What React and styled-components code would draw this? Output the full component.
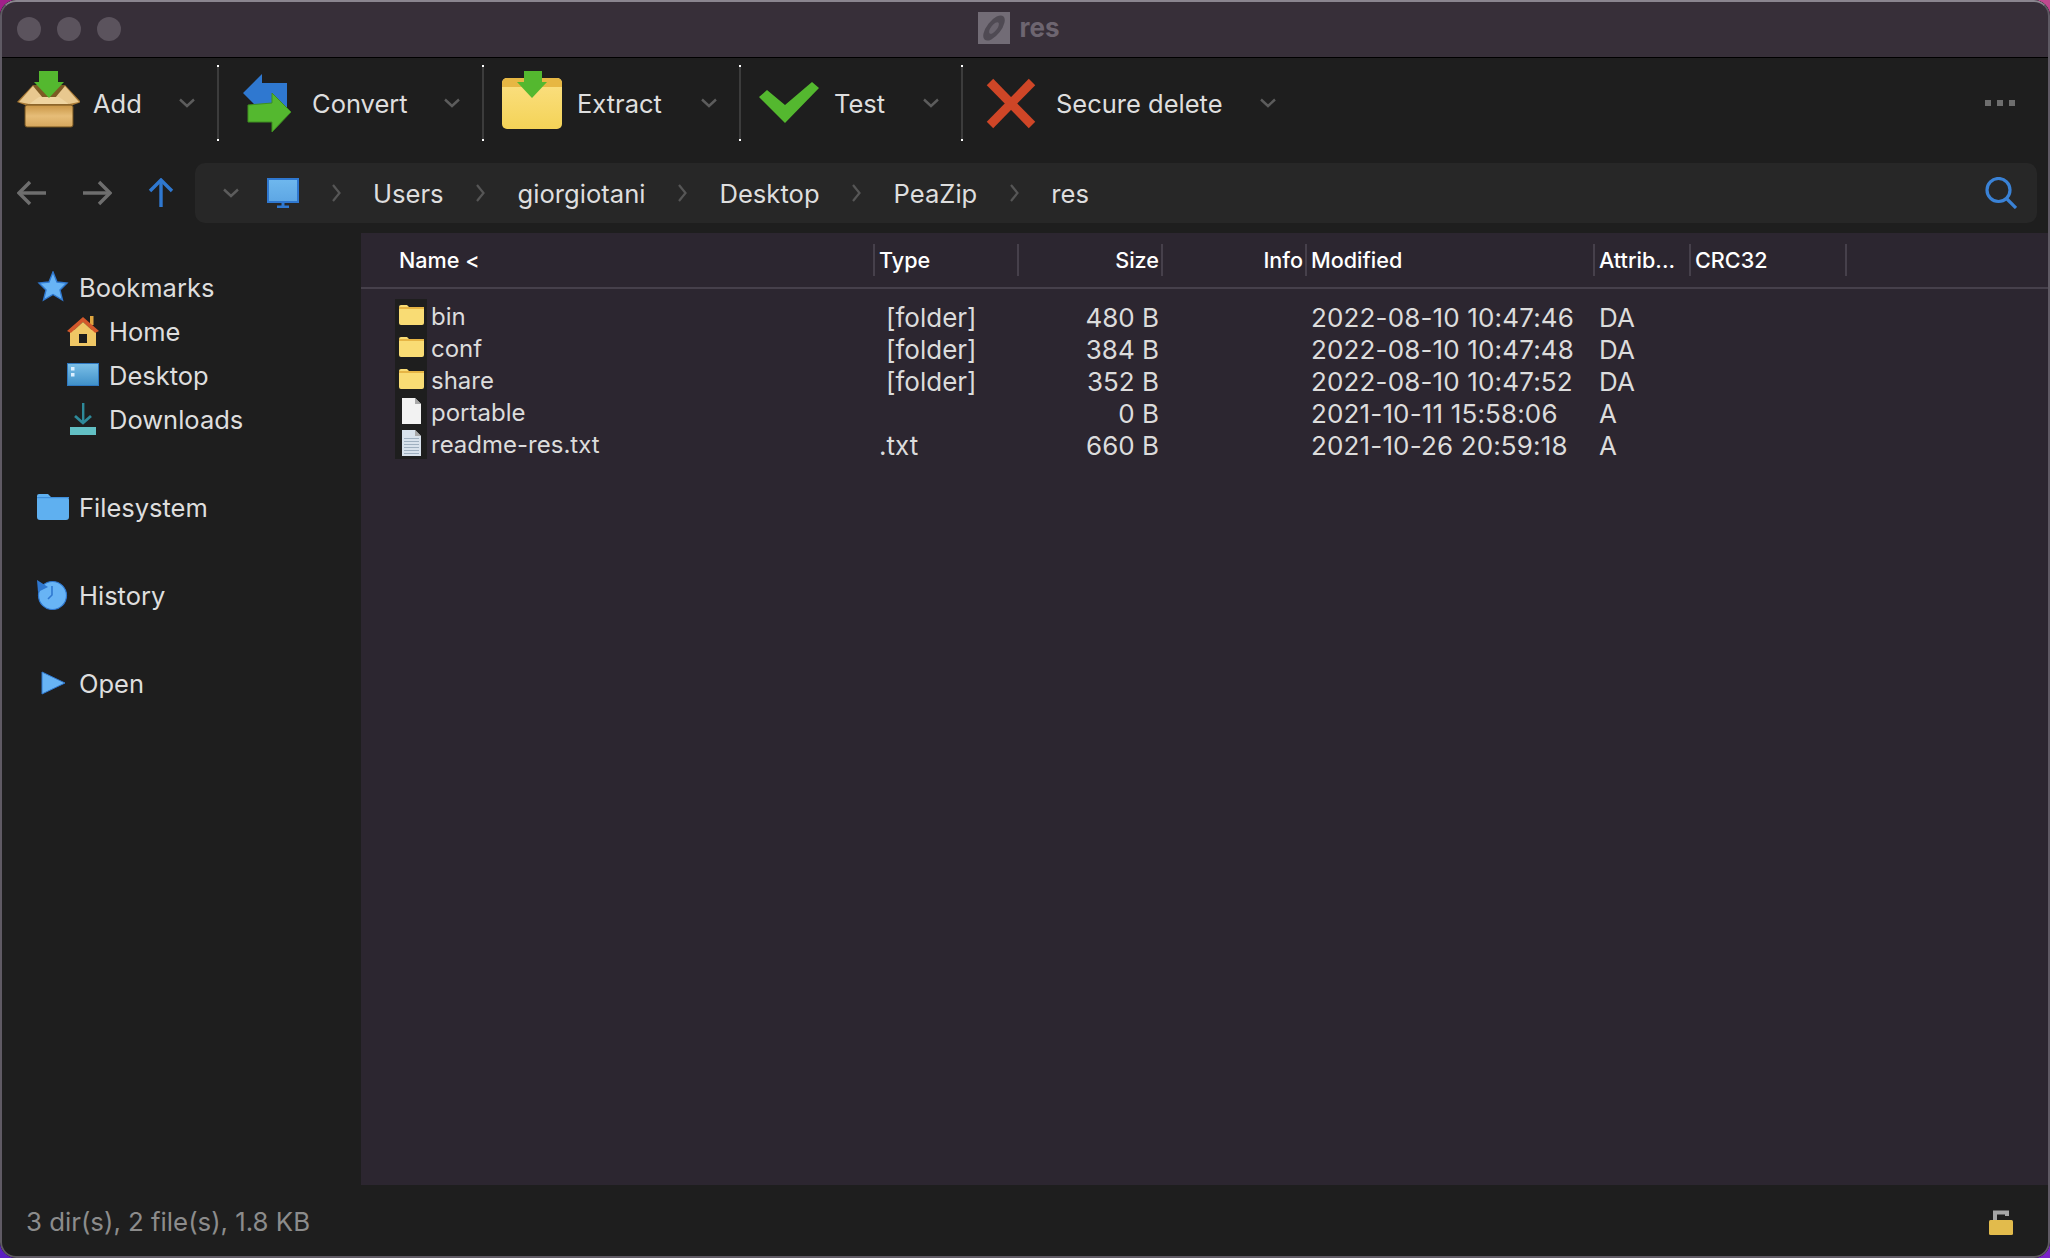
import styled, { createGlobalStyle } from "styled-components";

const GlobalStyle = createGlobalStyle`
	html, body {
		margin: 0;
		padding: 0;
		overflow: hidden;
	}
	body {
		font-family: Inter, "Liberation Sans", sans-serif;
		background: #000;
	}
`;

const columns = "512px 144px 144px 144px 288px 96px 156px 1fr";

const tools = [
	{ label: "Add", width: 217, Icon: AddIcon },
	{ label: "Convert", width: 263, Icon: ConvertIcon },
	{ label: "Extract", width: 255, Icon: ExtractIcon },
	{ label: "Test", width: 220, Icon: TestIcon },
	{ label: "Secure delete", width: 335, Icon: DeleteIcon, last: true },
];

const crumbs = ["Users", "giorgiotani", "Desktop", "PeaZip", "res"];

const files = [
	{ name: "bin", folder: true, type: "[folder]", size: "480 B", date: "2022-08-10 10:47:46", attr: "DA" },
	{ name: "conf", folder: true, type: "[folder]", size: "384 B", date: "2022-08-10 10:47:48", attr: "DA" },
	{ name: "share", folder: true, type: "[folder]", size: "352 B", date: "2022-08-10 10:47:52", attr: "DA" },
	{ name: "portable", type: "", size: "0 B", date: "2021-10-11 15:58:06", attr: "A" },
	{ name: "readme-res.txt", lines: true, type: ".txt", size: "660 B", date: "2021-10-26 20:59:18", attr: "A" },
];

function AddIcon() {
	return (
		<svg width="64" height="64" viewBox="-1 0 64 64">
			<defs>
				<linearGradient id="boxBody" x1="0" y1="0" x2="0" y2="1">
					<stop offset="0" stopColor="#c99545" />
					<stop offset="0.5" stopColor="#e6bd78" />
					<stop offset="1" stopColor="#d6a65c" />
				</linearGradient>
			</defs>
			<polygon points="0,31 16,14 48,14 64,31 56,34 8,34" fill="#a97a36" />
			<polygon points="16,14 48,14 42,27 22,27" fill="#7d5a24" />
			<polygon points="2,31 16,15 26,27 12,33" fill="#e8c88f" />
			<polygon points="62,31 48,15 38,27 52,33" fill="#e8c88f" />
			<polygon points="12,33 22,26 42,26 52,33" fill="#efd4a0" />
			<rect x="8" y="34" width="48" height="22" rx="2" fill="url(#boxBody)" stroke="#70501f" strokeWidth="1" />
			<polygon points="22,0 41,0 41,11 47,11 32,27 17,11 22,11" fill="#54b82f" />
		</svg>
	);
}

function ConvertIcon() {
	return (
		<svg width="64" height="64" viewBox="0 0 64 64">
			<polygon points="8,22 27,3 27,12 52,12 52,37 27,41" fill="#2f78d0" />
			<polygon points="56,41 37,22 37,32 13,34 13,51 37,51 37,61" fill="#54b82f" stroke="#3f8f20" strokeWidth="1" />
		</svg>
	);
}

function ExtractIcon() {
	return (
		<svg width="64" height="64" viewBox="0 0 64 64">
			<defs>
				<linearGradient id="folderBody" x1="0" y1="0" x2="0" y2="1">
					<stop offset="0" stopColor="#fbe083" />
					<stop offset="1" stopColor="#f4d357" />
				</linearGradient>
			</defs>
			<rect x="2" y="7" width="60" height="51" rx="5" fill="url(#folderBody)" />
			<path d="M7 7h50a5 5 0 0 1 5 5v4H2v-4a5 5 0 0 1 5-5z" fill="#e7b743" />
			<polygon points="24,0 42,0 42,11 47,11 32,27 17,11 24,11" fill="#54b82f" />
		</svg>
	);
}

function TestIcon() {
	return (
		<svg width="64" height="64" viewBox="0 0 64 64">
			<polygon points="2,26 10,19 28,34 55,11 62,17 28,52" fill="#54b82f" />
		</svg>
	);
}

function DeleteIcon() {
	return (
		<svg width="64" height="64" viewBox="0 0 64 64">
			<g stroke="#cf4627" strokeWidth="9">
				<line x1="11" y1="11" x2="53" y2="54" />
				<line x1="53" y1="11" x2="11" y2="54" />
			</g>
		</svg>
	);
}

function Chevron() {
	return (
		<svg width="16" height="10" viewBox="0 0 16 10" fill="none" stroke="#5c5c5c" strokeWidth="2.4">
			<polyline points="1,1.5 8,8 15,1.5" />
		</svg>
	);
}

function CrumbArrow() {
	return (
		<svg width="9" height="18" viewBox="0 0 9 18" fill="none" stroke="#565656" strokeWidth="2.2">
			<polyline points="1,1 7.5,9 1,17" />
		</svg>
	);
}

function NavArrow({ color, dir }) {
	const angle = { left: 0, right: 180, up: 90 }[dir];
	return (
		<svg width="30" height="30" viewBox="0 0 30 30" fill="none" stroke={color} strokeWidth="3.4">
			<g transform={`rotate(${angle} 15 15)`}>
				<line x1="2" y1="15" x2="29" y2="15" />
				<polyline points="13,4 2,15 13,26" />
			</g>
		</svg>
	);
}

function ComputerIcon() {
	return (
		<svg width="32" height="30" viewBox="0 0 32 30">
			<defs>
				<linearGradient id="screen" x1="0" y1="0" x2="0" y2="1">
					<stop offset="0" stopColor="#6fb8ee" />
					<stop offset="1" stopColor="#5da6e4" />
				</linearGradient>
			</defs>
			<rect x="1" y="1" width="30" height="23" fill="url(#screen)" stroke="#2f78d0" strokeWidth="2" />
			<rect x="14.5" y="24" width="3" height="4" fill="#2f78d0" />
			<rect x="10" y="27.5" width="12" height="2.5" fill="#2f78d0" />
		</svg>
	);
}

function SearchIcon() {
	return (
		<svg width="32" height="32" viewBox="0 0 32 32" fill="none" stroke="#3a82d6" strokeWidth="3.2">
			<circle cx="13.5" cy="13" r="11.5" />
			<line x1="21.5" y1="21.5" x2="31" y2="31" />
		</svg>
	);
}

function StarIcon() {
	return (
		<svg width="32" height="32" viewBox="0 0 32 32">
			<polygon points="16,1 20,11 30,12 23,19 25.5,29 16,23.5 6.5,29 9,19 2,12 12,11" fill="#68b4f5" stroke="#2f78d0" strokeWidth="1.4" />
		</svg>
	);
}

function HomeIcon() {
	return (
		<svg width="32" height="32" viewBox="0 0 32 32">
			<rect x="23" y="1" width="3.5" height="9" fill="#e0a640" />
			<rect x="3" y="15" width="26" height="16" fill="#efc765" />
			<polygon points="16,2 32,16 28,18 16,7 4,18 0,16" fill="#d3582b" />
			<polygon points="16,7 28,18 4,18" fill="#efc765" />
			<rect x="12" y="19" width="8" height="9" fill="#1c1c1c" />
		</svg>
	);
}

function DesktopIcon() {
	return (
		<svg width="32" height="32" viewBox="0 0 32 32">
			<defs>
				<linearGradient id="desk" x1="0" y1="0" x2="0" y2="1">
					<stop offset="0" stopColor="#7cc0e8" />
					<stop offset="1" stopColor="#3f90c8" />
				</linearGradient>
			</defs>
			<rect x="0.5" y="4.5" width="31" height="22" fill="url(#desk)" stroke="#2f78c0" />
			<rect x="4" y="8" width="3.5" height="3.5" fill="#dcefff" />
			<rect x="4" y="14" width="3.5" height="3.5" fill="#dcefff" />
		</svg>
	);
}

function DownloadIcon() {
	return (
		<svg width="32" height="32" viewBox="0 0 32 32">
			<rect x="3" y="24" width="26" height="8" fill="#62c0c4" />
			<rect x="15" y="0" width="2.4" height="18" fill="#2e8a9a" />
			<polyline points="8,13 16,20 24,13" fill="none" stroke="#2e8a9a" strokeWidth="2.8" />
		</svg>
	);
}

function DriveIcon() {
	return (
		<svg width="32" height="26" viewBox="0 0 32 26">
			<path d="M2 0h9l3 3h15a3 3 0 0 1 3 3v17a3 3 0 0 1-3 3H3a3 3 0 0 1-3-3V2a2 2 0 0 1 2-2z" fill="#5fb0f0" />
			<rect x="0" y="3" width="32" height="1.2" fill="#3f8fdc" />
		</svg>
	);
}

function HistoryIcon() {
	return (
		<svg width="32" height="30" viewBox="0 0 32 30">
			<circle cx="15.5" cy="15.5" r="14" fill="#68b4f5" stroke="#2f78d0" strokeWidth="1.2" />
			<polygon points="0,0 11,7 1,12" fill="#2f78d0" />
			<polyline points="15,6 15,15 11,19" fill="none" stroke="#2f78d0" strokeWidth="1.6" />
		</svg>
	);
}

function PlayIcon() {
	return (
		<svg width="32" height="24" viewBox="0 0 32 24">
			<polygon points="5,1 28,12 5,23" fill="#68b4f5" stroke="#2f78d0" strokeWidth="1" />
		</svg>
	);
}

function FolderIcon() {
	return (
		<svg width="25" height="20" viewBox="0 0 25 20">
			<path d="M2 0h6l2 2h13a2 2 0 0 1 2 2v14a2 2 0 0 1-2 2H2a2 2 0 0 1-2-2V2a2 2 0 0 1 2-2z" fill="#f9dc74" />
			<rect x="0" y="2" width="25" height="2" fill="#e6b545" />
		</svg>
	);
}

function FileIcon({ lines }) {
	return (
		<svg width="20" height="26" viewBox="0 0 20 26">
			<path d="M1 0h13l6 6v20H1z" fill={lines ? "#d8e2ec" : "#f2f2f2"} />
			<path d="M14 0l6 6h-6z" fill="#a8a8a8" />
			{lines &&
				[8, 11, 14, 17, 20, 23].map((y) => (
					<rect key={y} x="3" y={y} width="15" height="1" fill="#9fb0c0" />
				))}
		</svg>
	);
}

function AppIcon() {
	return (
		<svg width="32" height="32" viewBox="0 0 32 32">
			<rect width="32" height="32" fill="#726c76" />
			<ellipse cx="16" cy="16" rx="7" ry="15" transform="rotate(38 16 16)" fill="#4f4a53" />
			<ellipse cx="16" cy="16" rx="3" ry="7" transform="rotate(38 16 16)" fill="#6a646e" />
		</svg>
	);
}

function LockIcon() {
	return (
		<svg width="24" height="26" viewBox="0 0 24 26">
			<path d="M6 12V3.5h12V7" fill="none" stroke="#a6a6a6" strokeWidth="4" />
			<rect x="0" y="11" width="24" height="15" rx="1.5" fill="#e2bb4c" />
		</svg>
	);
}

export default function App() {
	return (
		<>
			<GlobalStyle />
			<Desk>
				<Window>
					<TitleBar>
						<Lights>
							<Light />
							<Light />
							<Light />
						</Lights>
						<Title>
							<AppIcon />
							res
						</Title>
					</TitleBar>
					<Toolbar>
						{tools.map(({ label, width, Icon, last }) => (
							<ToolGroup key={label}>
								<ToolButton $width={width}>
									<ToolIcon>
										<Icon />
									</ToolIcon>
									<ToolLabel>{label}</ToolLabel>
									<ToolChevron>
										<Chevron />
									</ToolChevron>
								</ToolButton>
								{!last && <ToolSeparator />}
							</ToolGroup>
						))}
						<MoreDots>
							<span />
							<span />
							<span />
						</MoreDots>
					</Toolbar>
					<NavRow>
						<NavButton>
							<NavArrow dir="left" color="#6e6e6e" />
						</NavButton>
						<NavButton>
							<NavArrow dir="right" color="#6e6e6e" />
						</NavButton>
						<NavButton>
							<NavArrow dir="up" color="#2f78d0" />
						</NavButton>
						<AddressBar>
							<Chevron />
							<ComputerSlot>
								<ComputerIcon />
							</ComputerSlot>
							{crumbs.map((crumb) => (
								<Crumb key={crumb}>
									<CrumbArrow />
									<CrumbLabel>{crumb}</CrumbLabel>
								</Crumb>
							))}
							<SearchSlot>
								<SearchIcon />
							</SearchSlot>
						</AddressBar>
					</NavRow>
					<Body>
						<Sidebar>
							<SideGroup>
								<SideRow>
									<SideIcon><StarIcon /></SideIcon>
									Bookmarks
								</SideRow>
								<SideRow $child>
									<SideIcon><HomeIcon /></SideIcon>
									Home
								</SideRow>
								<SideRow $child>
									<SideIcon><DesktopIcon /></SideIcon>
									Desktop
								</SideRow>
								<SideRow $child>
									<SideIcon><DownloadIcon /></SideIcon>
									Downloads
								</SideRow>
							</SideGroup>
							<SideGroup>
								<SideRow>
									<SideIcon><DriveIcon /></SideIcon>
									Filesystem
								</SideRow>
							</SideGroup>
							<SideGroup>
								<SideRow>
									<SideIcon><HistoryIcon /></SideIcon>
									History
								</SideRow>
							</SideGroup>
							<SideGroup>
								<SideRow>
									<SideIcon><PlayIcon /></SideIcon>
									Open
								</SideRow>
							</SideGroup>
						</Sidebar>
						<Panel>
							<HeaderRow>
								<HeaderCell $first>Name &lt;</HeaderCell>
								<HeaderCell>Type</HeaderCell>
								<HeaderCell $right>Size</HeaderCell>
								<HeaderCell $right>Info</HeaderCell>
								<HeaderCell>Modified</HeaderCell>
								<HeaderCell>Attrib...</HeaderCell>
								<HeaderCell>CRC32</HeaderCell>
								<HeaderCell />
							</HeaderRow>
							<FileList>
								{files.map((file) => (
									<FileRow key={file.name}>
										<NameCell>
											<IconStrip>
												{file.folder ? <FolderIcon /> : <FileIcon lines={file.lines} />}
											</IconStrip>
											<FileName>{file.name}</FileName>
										</NameCell>
										<DataCell $indent={file.folder}>{file.type}</DataCell>
										<DataCell $right>{file.size}</DataCell>
										<DataCell />
										<DataCell $date>{file.date}</DataCell>
										<DataCell>{file.attr}</DataCell>
									</FileRow>
								))}
							</FileList>
						</Panel>
					</Body>
					<StatusBar>
						<StatusText>3 dir(s), 2 file(s), 1.8 KB</StatusText>
						<LockIcon />
					</StatusBar>
				</Window>
			</Desk>
		</>
	);
}

const Desk = styled.div`
	width: 2050px;
	height: 1258px;
	background: conic-gradient(#c0488f 0 90deg, #7a22c8 90deg 180deg, #5a1fc0 180deg 270deg, #a0208a 270deg);
`;

const Window = styled.div`
	position: relative;
	display: flex;
	flex-direction: column;
	width: 100%;
	height: 100%;
	border-radius: 16px;
	overflow: hidden;
	background: #1e1e1e;
	&::after {
		content: "";
		position: absolute;
		inset: 0;
		border: 2px solid #5f5a64;
		border-top-color: #8a858f;
		border-radius: 16px;
		pointer-events: none;
	}
`;

const TitleBar = styled.div`
	display: grid;
	grid-template-columns: 1fr auto 1fr;
	align-items: center;
	height: 57px;
	padding-right: 12px;
	background: #372f39;
	border-bottom: 1px solid #000;
`;

const Lights = styled.div`
	display: flex;
	gap: 16px;
	padding-left: 17px;
`;

const Light = styled.span`
	width: 24px;
	height: 24px;
	border-radius: 50%;
	background: #5b535d;
`;

const Title = styled.div`
	display: flex;
	align-items: center;
	gap: 9px;
	padding-bottom: 2px;
	font-size: 26px;
	font-weight: 700;
	color: #6d6570;
`;

const Toolbar = styled.div`
	display: flex;
	align-items: center;
	height: 90px;
`;

const ToolGroup = styled.div`
	display: flex;
	align-items: center;
`;

const ToolButton = styled.div`
	display: flex;
	align-items: center;
	box-sizing: border-box;
	width: ${(props) => props.$width}px;
	padding: 0 22px 0 16px;
`;

const ToolIcon = styled.span`
	display: flex;
	width: 64px;
	height: 64px;
	margin-right: 13px;
`;

const ToolLabel = styled.span`
	padding-top: 1px;
	font-size: 25.5px;
	color: #dedede;
	white-space: nowrap;
`;

const ToolChevron = styled.span`
	display: flex;
	margin-left: auto;
`;

const ToolSeparator = styled.span`
	position: relative;
	width: 2px;
	height: 76px;
	background: #3c3c3c;
	&::before,
	&::after {
		content: "";
		position: absolute;
		left: 0;
		width: 2px;
		height: 2px;
		background: #fff;
	}
	&::before {
		top: 0;
	}
	&::after {
		bottom: 0;
	}
`;

const MoreDots = styled.div`
	display: flex;
	gap: 6px;
	margin-left: auto;
	padding-right: 35px;
	span {
		width: 6px;
		height: 6px;
		background: #6e6e6e;
	}
`;

const NavRow = styled.div`
	display: flex;
	align-items: center;
	height: 60px;
	margin: 15px 0 10px;
`;

const NavButton = styled.span`
	display: flex;
	justify-content: center;
	width: 64.5px;
`;

const AddressBar = styled.div`
	display: flex;
	flex: 1;
	align-items: center;
	height: 60px;
	margin: 0 13px 0 1.5px;
	padding-left: 28px;
	background: #272727;
	border-radius: 10px;
`;

const ComputerSlot = styled.span`
	display: flex;
	margin-left: 28px;
`;

const Crumb = styled.span`
	display: flex;
	align-items: center;
	gap: 32.4px;
	margin-left: 32.6px;
`;

const CrumbLabel = styled.span`
	font-size: 25.6px;
	color: #dedede;
`;

const SearchSlot = styled.span`
	display: flex;
	margin-left: auto;
	padding-right: 20px;
`;

const Body = styled.div`
	display: flex;
	flex: 1;
	min-height: 0;
`;

const Sidebar = styled.div`
	box-sizing: border-box;
	width: 361px;
	padding-top: 32px;
	background: #1e1e1e;
`;

const SideGroup = styled.div`
	margin-bottom: 44px;
`;

const SideRow = styled.div`
	display: flex;
	align-items: center;
	gap: 10px;
	height: 44px;
	padding-left: ${(props) => (props.$child ? "67px" : "37px")};
	font-size: 25.5px;
	color: #dedede;
`;

const SideIcon = styled.span`
	display: flex;
	justify-content: center;
	width: 32px;
`;

const Panel = styled.div`
	flex: 1;
	background: #2c2630;
`;

const HeaderRow = styled.div`
	display: grid;
	grid-template-columns: ${columns};
	align-items: center;
	box-sizing: border-box;
	height: 56px;
	border-bottom: 2px solid #46404b;
`;

const HeaderCell = styled.div`
	box-sizing: border-box;
	height: 32px;
	padding: ${(props) => (props.$first ? "0 0 0 38px" : props.$right ? "0 2px 0 0" : "0 0 0 4px")};
	border-left: ${(props) => (props.$first ? "none" : "2px solid #46404b")};
	font-size: 21.6px;
	font-weight: 500;
	line-height: 32px;
	color: #fff;
	text-align: ${(props) => (props.$right ? "right" : "left")};
	white-space: nowrap;
`;

const FileList = styled.div`
	padding-top: 10px;
`;

const FileRow = styled.div`
	display: grid;
	grid-template-columns: ${columns};
	grid-template-rows: 32px;
	height: 32px;
`;

const NameCell = styled.div`
	display: flex;
	align-items: center;
	height: 32px;
	padding-left: 34px;
`;

const IconStrip = styled.span`
	display: flex;
	align-items: center;
	justify-content: center;
	width: 32px;
	height: 32px;
	background: #1e1e1e;
`;

const FileName = styled.span`
	margin-left: 4px;
	padding-top: 3px;
	font-size: 24px;
	color: #dcdcdc;
	white-space: nowrap;
`;

const DataCell = styled.div`
	box-sizing: border-box;
	padding: ${(props) => (props.$right ? "0 2px 0 0" : props.$indent ? "0 0 0 13px" : "0 0 0 6px")};
	font-size: 26px;
	letter-spacing: ${(props) => (props.$date ? "0.15px" : "0")};
	line-height: 38px;
	color: #dcdcdc;
	text-align: ${(props) => (props.$right ? "right" : "left")};
	white-space: nowrap;
`;

const StatusBar = styled.div`
	display: flex;
	align-items: center;
	justify-content: space-between;
	height: 73px;
	padding: 0 37px 0 26px;
`;

const StatusText = styled.span`
	font-size: 25.8px;
	color: #8c8c8c;
`;
